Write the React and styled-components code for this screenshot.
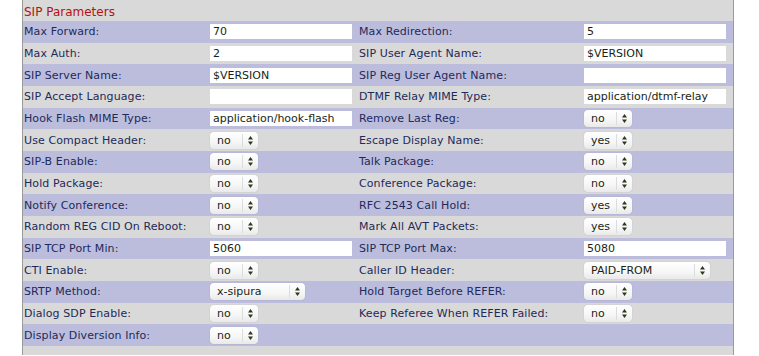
import styled, { createGlobalStyle } from 'styled-components';

const GlobalStyle = createGlobalStyle`
  html, body {
    margin: 0;
    padding: 0;
    background: #fff;
    overflow: hidden;
  }
  body {
    font-family: "DejaVu Sans", Verdana, sans-serif;
  }
`;

const Panel = styled.div`
  margin-left: 22px;
  width: 710px;
  border-left: 1px solid #9a9a9a;
  border-right: 1px solid #9a9a9a;
  background: #d9d9d9;
`;

const Title = styled.div`
  height: 21px;
  padding-left: 1px;
  display: flex;
  align-items: flex-end;
  font-size: 12px;
  color: #b3120f;
  line-height: 15px;
  padding-bottom: 1px;
  box-sizing: border-box;
`;

const Row = styled.div`
  height: ${p => p.h || '21.67px'};
  display: grid;
  grid-template-columns: 186px 149px 225px 1fr;
  align-items: center;
  padding-left: 1px;
  background: ${p => p.alt ? '#bcbddc' : '#d9d9d9'};
`;

const Label = styled.span`
  font-size: 11px;
  color: #1e2a5a;
  white-space: nowrap;
  letter-spacing: 0.1px;
`;

const TextBox = styled.div`
  width: 142px;
  height: 15px;
  background: #fff;
  font-size: 11px;
  line-height: 15px;
  padding-left: 3px;
  box-sizing: border-box;
  color: #1a1f12;
  white-space: nowrap;
  overflow: hidden;
`;

const Select = styled.div`
  width: ${p => p.w}px;
  height: 17px;
  box-sizing: border-box;
  border-radius: 4px;
  background: linear-gradient(#ffffff, #f6f6f6 60%, #e9e9e9);
  box-shadow: 0 0 1px rgba(0, 0, 0, 0.25);
  display: flex;
  align-items: center;
  font-size: 11px;
  color: #1a1f12;
`;

const SelectText = styled.span`
  flex: 1;
  padding-left: 7px;
  line-height: 17px;
`;

const Arrows = styled.span`
  width: 15px;
  height: 13px;
  border-left: 1px solid #dcdcdc;
  display: flex;
  align-items: center;
  justify-content: center;
`;

const ArrowIcon = () => (
  <svg width="5" height="9" viewBox="0 0 5 9">
    <path d="M2.5 0 L5 3.5 L0 3.5 Z" fill="#2a3a1a" />
    <path d="M0 5.5 L5 5.5 L2.5 9 Z" fill="#2a3a1a" />
  </svg>
);

const Field = ({ f }) => {
  if (!f) return <span />;
  if (f.sel) {
    return (
      <Select w={f.w || 48}>
        <SelectText>{f.sel}</SelectText>
        <Arrows><ArrowIcon /></Arrows>
      </Select>
    );
  }
  return <TextBox>{f.text}</TextBox>;
};

const rows = [
  ['Max Forward:', { text: '70' }, 'Max Redirection:', { text: '5' }],
  ['Max Auth:', { text: '2' }, 'SIP User Agent Name:', { text: '$VERSION' }],
  ['SIP Server Name:', { text: '$VERSION' }, 'SIP Reg User Agent Name:', { text: '' }],
  ['SIP Accept Language:', { text: '' }, 'DTMF Relay MIME Type:', { text: 'application/dtmf-relay' }],
  ['Hook Flash MIME Type:', { text: 'application/hook-flash' }, 'Remove Last Reg:', { sel: 'no' }],
  ['Use Compact Header:', { sel: 'no' }, 'Escape Display Name:', { sel: 'yes' }],
  ['SIP-B Enable:', { sel: 'no' }, 'Talk Package:', { sel: 'no' }],
  ['Hold Package:', { sel: 'no' }, 'Conference Package:', { sel: 'no' }],
  ['Notify Conference:', { sel: 'no' }, 'RFC 2543 Call Hold:', { sel: 'yes' }],
  ['Random REG CID On Reboot:', { sel: 'no' }, 'Mark All AVT Packets:', { sel: 'yes' }],
  ['SIP TCP Port Min:', { text: '5060' }, 'SIP TCP Port Max:', { text: '5080' }],
  ['CTI Enable:', { sel: 'no' }, 'Caller ID Header:', { sel: 'PAID-FROM', w: 126 }],
  ['SRTP Method:', { sel: 'x-sipura', w: 95 }, 'Hold Target Before REFER:', { sel: 'no' }],
  ['Dialog SDP Enable:', { sel: 'no' }, 'Keep Referee When REFER Failed:', { sel: 'no' }],
  ['Display Diversion Info:', { sel: 'no' }, '', null],
];

export default function App() {
  return (
    <>
      <GlobalStyle />
      <Panel>
        <Title>SIP Parameters</Title>
        {rows.map((r, i) => (
          <Row key={i} alt={i % 2 === 0}>
            <Label>{r[0]}</Label>
            <Field f={r[1]} />
            <Label>{r[2]}</Label>
            <Field f={r[3]} />
          </Row>
        ))}
        <Row h="9px" />
      </Panel>
    </>
  );
}
